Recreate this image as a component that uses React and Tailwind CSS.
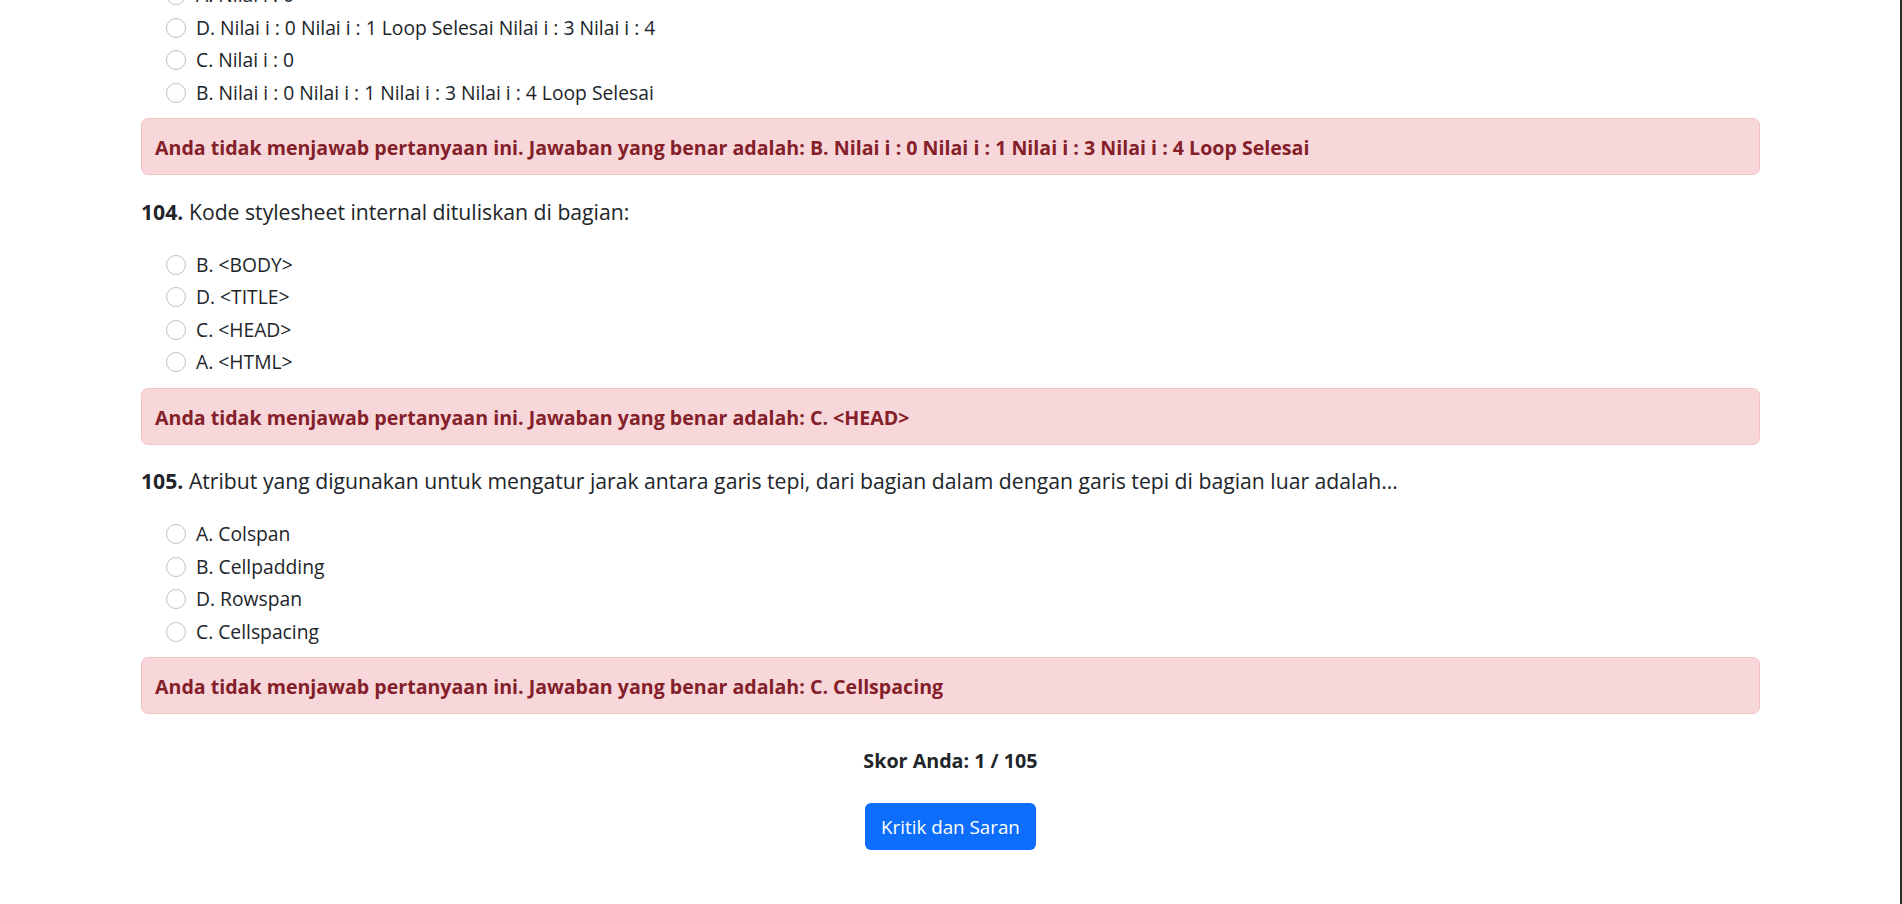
import React from 'react';

const questions = [
  {
    no: null,
    options: [
      'A. Nilai i : 0',
      'D. Nilai i : 0 Nilai i : 1 Loop Selesai Nilai i : 3 Nilai i : 4',
      'C. Nilai i : 0',
      'B. Nilai i : 0 Nilai i : 1 Nilai i : 3 Nilai i : 4 Loop Selesai',
    ],
    answer: 'B. Nilai i : 0 Nilai i : 1 Nilai i : 3 Nilai i : 4 Loop Selesai',
  },
  {
    no: 104,
    text: 'Kode stylesheet internal dituliskan di bagian:',
    options: ['B. <BODY>', 'D. <TITLE>', 'C. <HEAD>', 'A. <HTML>'],
    answer: 'C. <HEAD>',
  },
  {
    no: 105,
    text: 'Atribut yang digunakan untuk mengatur jarak antara garis tepi, dari bagian dalam dengan garis tepi di bagian luar adalah...',
    options: ['A. Colspan', 'B. Cellpadding', 'D. Rowspan', 'C. Cellspacing'],
    answer: 'C. Cellspacing',
  },
];

function Option({ label }) {
  return (
    <label className="mb-[2.5px] flex h-[30px] items-center">
      <span className="ml-[25px] h-5 w-5 shrink-0 rounded-full border border-[#bfbfbf] bg-white" />
      <span className="ml-[10px] text-[19.3px] leading-[30px] text-[#212529]">{label}</span>
    </label>
  );
}

function Question({ q, first }) {
  return (
    <div>
      {q.no && (
        <p className="mt-[21.5px] mb-[23px] text-[21.2px] leading-[30px] text-[#212529]">
          <span className="font-bold">{q.no}.</span> {q.text}
        </p>
      )}
      <div className={first ? '-mt-[20px]' : ''}>
        {q.options.map((o) => (
          <Option key={o} label={o} />
        ))}
      </div>
      <div className="mt-[10.5px] rounded-[7px] border border-[#f5c2c7] bg-[#f8d7da] px-[13px] pt-[14px] pb-[11px]">
        <p className="text-[19.6px] font-bold leading-[30px] text-[#842029]">
          Anda tidak menjawab pertanyaan ini. Jawaban yang benar adalah: {q.answer}
        </p>
      </div>
    </div>
  );
}

export default function App() {
  return (
    <div
      className="h-[904px] overflow-hidden border-r-2 border-[#2b2b2b] bg-white"
      style={{ fontFamily: '"Open Sans", "Noto Sans", sans-serif' }}
    >
      <div className="pl-[141px] pr-[140px]">
        {questions.map((q, i) => (
          <Question key={i} q={q} first={i === 0} />
        ))}
        <p className="mt-[32px] text-center text-[19.7px] font-bold leading-[30px] text-[#212529]">
          Skor Anda: 1 / 105
        </p>
        <div className="mt-[27px] flex justify-center">
          <button className="h-[47px] w-[171px] rounded-[6px] bg-[#0d6efd] text-[18.8px] leading-[30px] text-white">
            Kritik dan Saran
          </button>
        </div>
      </div>
    </div>
  );
}
